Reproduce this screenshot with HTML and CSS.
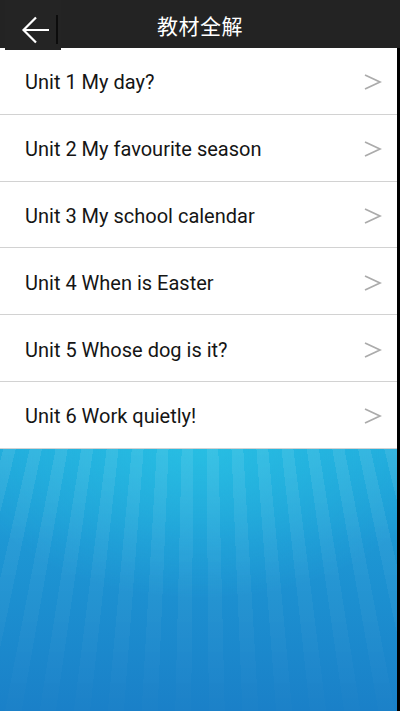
FILE: index.html
```html
<!DOCTYPE html>
<html>
<head>
<meta charset="utf-8">
<link rel="stylesheet" href="styles.css">
</head>
<body>
<div class="app">
  <header class="topbar">
    <div class="back">
      <svg width="30" height="28" viewBox="0 0 30 28"><path d="M28 14H3M15 1.5L2.5 14L15 26.5" fill="none" stroke="#fff" stroke-width="2.2"/></svg>
    </div>
    <h1 class="title">教材全解</h1>
  </header>
  <ul class="list">
    <li class="row"><span>Unit 1 My day?</span><svg class="chev" width="18" height="16" viewBox="0 0 18 16"><path d="M1 1L16 8L1 15" fill="none" stroke="#ababab" stroke-width="1.8"/></svg></li>
    <li class="row"><span>Unit 2 My favourite season</span><svg class="chev" width="18" height="16" viewBox="0 0 18 16"><path d="M1 1L16 8L1 15" fill="none" stroke="#ababab" stroke-width="1.8"/></svg></li>
    <li class="row"><span>Unit 3 My school calendar</span><svg class="chev" width="18" height="16" viewBox="0 0 18 16"><path d="M1 1L16 8L1 15" fill="none" stroke="#ababab" stroke-width="1.8"/></svg></li>
    <li class="row"><span>Unit 4 When is Easter</span><svg class="chev" width="18" height="16" viewBox="0 0 18 16"><path d="M1 1L16 8L1 15" fill="none" stroke="#ababab" stroke-width="1.8"/></svg></li>
    <li class="row"><span>Unit 5 Whose dog is it?</span><svg class="chev" width="18" height="16" viewBox="0 0 18 16"><path d="M1 1L16 8L1 15" fill="none" stroke="#ababab" stroke-width="1.8"/></svg></li>
    <li class="row"><span>Unit 6 Work quietly!</span><svg class="chev" width="18" height="16" viewBox="0 0 18 16"><path d="M1 1L16 8L1 15" fill="none" stroke="#ababab" stroke-width="1.8"/></svg></li>
  </ul>
  <div class="bg"></div>
</div>
</body>
</html>
```
FILE: styles.css
```css
html, body { margin: 0; padding: 0; }
body { width: 400px; height: 711px; overflow: hidden; font-family: Roboto, "Noto Sans CJK SC", sans-serif; }
.app { position: relative; display: flex; flex-direction: column; height: 711px; }
.app::after { content: ""; position: absolute; right: 0; top: 48px; bottom: 0; width: 3px; background: #000; z-index: 3; }
.topbar { height: 48px; background: #232323; display: flex; align-items: center; justify-content: center; position: relative; flex: none; }
.back { position: absolute; left: 5px; top: 0; width: 56px; height: 50px; background: #242424; display: flex; align-items: flex-start; padding: 16px 0 0 16px; box-sizing: border-box; z-index: 2; }
.back::after { content: ""; position: absolute; left: 51px; top: 15px; width: 2px; height: 29px; background: #0c0c0c; }
.back svg { display: block; }
.title { margin: 0; color: #fff; font-size: 21px; font-weight: normal; letter-spacing: 0.5px; margin-top: 1px; }
.list { list-style: none; margin: 0; padding: 0; background: #fff; flex: none; }
.row { height: 66.8px; box-sizing: border-box; border-bottom: 1.3px solid #d2d2d2; display: flex; align-items: center; justify-content: space-between; padding: 0 18px 0 25px; font-size: 20px; color: #151515; }
.row span { margin-top: 3px; }
.chev { display: block; margin-top: 3px; }
.bg { flex: 1; position: relative; overflow: hidden; background:
  radial-gradient(ellipse 240px 150px at 200px 0, rgba(45,205,232,0.55), rgba(45,205,232,0) 100%),
  linear-gradient(#21abdc 0%, #1d97d4 35%, #1a80c8 100%); }
.bg::before { content: ""; position: absolute; inset: 0; background: repeating-conic-gradient(from 0deg at 200px -750px, rgba(255,255,255,0.085) 0deg 0.9deg, rgba(255,255,255,0) 0.9deg 1.9deg);
  -webkit-mask-image: linear-gradient(#000 0%, rgba(0,0,0,0.55) 45%, rgba(0,0,0,0.12) 100%); mask-image: linear-gradient(#000 0%, rgba(0,0,0,0.55) 45%, rgba(0,0,0,0.12) 100%); }
```
